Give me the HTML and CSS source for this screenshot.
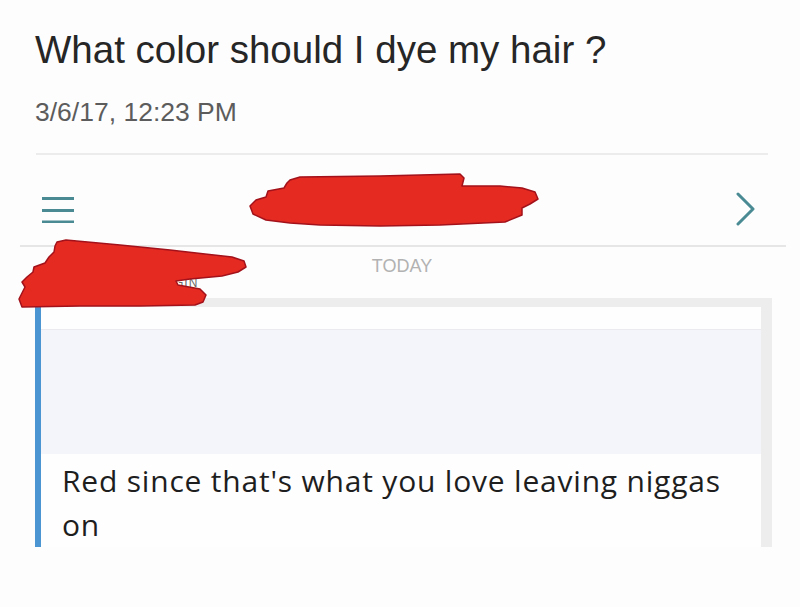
FILE: index.html
```html
<!DOCTYPE html>
<html>
<head>
<meta charset="utf-8">
<link rel="stylesheet" href="styles.css">
</head>
<body>
<div class="page">
  <h1 class="title">What color should I dye my hair ?</h1>
  <div class="date">3/6/17, 12:23 PM</div>
  <div class="rule"></div>
  <div class="navbar">
    <svg class="menu" width="34" height="28" viewBox="0 0 34 28">
      <path d="M1 3.5H33M1 15.5H33M1 27H33" stroke="#4a8a93" stroke-width="3" fill="none"/>
    </svg>
    <svg class="chev" width="20" height="34" viewBox="0 0 20 34">
      <path d="M2 2L17 17L2 32" stroke="#4a8a93" stroke-width="3" fill="none" stroke-linecap="round" stroke-linejoin="round"/>
    </svg>
  </div>
  <div class="rule2"></div>
  <div class="day">TODAY</div>
  <div class="sender">GIN</div>
  <div class="card">
    <div class="bar"></div>
    <div class="card-body">
      <div class="strip"></div>
      <div class="lav"></div>
      <p class="msg">Red since that's what you love leaving niggas on</p>
    </div>
  </div>
  <svg class="scribbles" width="800" height="607" viewBox="0 0 800 607">
    <path d="M290 180 L300 177 L380 176 L460 174 L464 178 L462 186 L500 186 L522 188 L535 192 L538 199 L530 204 L522 208 L522 215 L505 222 L440 225 L380 226 L320 225 L290 223 L266 220 L253 214 L250 206 L256 200 L266 197 L268 191 L284 188 L287 183 Z" fill="#e52a22" stroke="#a3121a" stroke-width="1.5" stroke-linejoin="round"/>
    <path d="M57 242 L66 240 L120 245 L170 250 L205 254 L232 257 L244 261 L246 267 L238 272 L222 276 L190 279 L176 281 L178 285 L200 289 L206 295 L203 302 L195 305 L140 306 L80 306 L22 307 L19 299 L22 293 L25 287 L22 282 L27 277 L33 272 L34 267 L45 263 L49 257 L54 252 L55 246 Z" fill="#e52a22" stroke="#a3121a" stroke-width="1.5" stroke-linejoin="round"/>
  </svg>
</div>
</body>
</html>
```

FILE: styles.css
```css
html, body {
  margin: 0;
  padding: 0;
  background: #fdfdfd;
}
.page {
  position: relative;
  width: 800px;
  height: 607px;
  overflow: hidden;
}
.title {
  margin: 0;
  padding: 28px 0 0 35px;
  font-family: "Liberation Sans", Arial, sans-serif;
  font-weight: normal;
  font-size: 38.5px;
  line-height: 44px;
  color: #262626;
}
.date {
  margin-top: 25px;
  padding-left: 35px;
  font-family: "Liberation Sans", Arial, sans-serif;
  font-size: 26.5px;
  line-height: 30px;
  color: #5c5c5c;
}
.rule {
  margin: 26px 32px 0 36px;
  height: 2px;
  background: #ececec;
}
.navbar {
  display: flex;
  justify-content: space-between;
  align-items: center;
  height: 72px;
  padding: 18px 44px 0 41px;
}
.menu, .chev {
  display: block;
}
.rule2 {
  margin: 0 14px 0 20px;
  height: 2px;
  background: #e6e6e6;
}
.day {
  margin-top: 9px;
  text-align: center;
  font-family: "Liberation Sans", Arial, sans-serif;
  font-size: 18px;
  line-height: 20px;
  color: #b2b2b2;
  padding-left: 4px;
}
.sender {
  padding-left: 174px;
  font-family: "Liberation Sans", Arial, sans-serif;
  font-size: 12px;
  line-height: 14px;
  letter-spacing: 1px;
  color: #6a6a6a;
  height: 22px;
}
.card {
  display: flex;
  margin-left: 35px;
  width: 737px;
  height: 249px;
}
.bar {
  width: 6px;
  margin-top: 8px;
  background: #4a95d2;
}
.card-body {
  flex: 1;
  display: flex;
  flex-direction: column;
  border-top: 9px solid #ededed;
  border-right: 11px solid #ededed;
  background: #fefefe;
}
.strip {
  height: 22px;
  background: #fefefe;
  border-bottom: 1px solid #ebebef;
}
.lav {
  height: 125px;
  background: #f4f5fb;
}
.msg {
  margin: 0;
  padding: 5px 30px 0 21px;
  font-family: "Open Sans", Lato, sans-serif;
  font-size: 30px;
  letter-spacing: 0.8px;
  line-height: 44px;
  color: #1e1e1e;
}
.scribbles {
  position: absolute;
  left: 0;
  top: 0;
  pointer-events: none;
}
```
